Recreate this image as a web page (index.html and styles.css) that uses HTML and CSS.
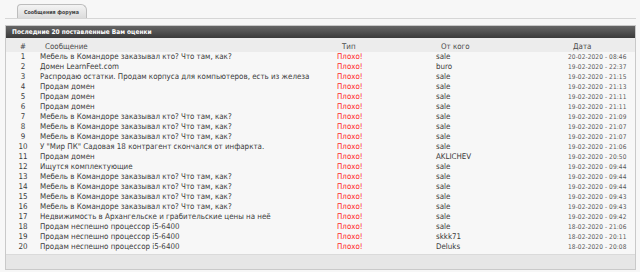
FILE: index.html
```html
<!DOCTYPE html>
<html lang="ru">
<head>
  <meta charset="UTF-8">
  <title>Оценки</title>
  <link rel="stylesheet" href="styles.css">
</head>
<body>

<div class="tabs">
  <span class="tab">Сообщения форума</span>
</div>

<div class="panel">
  <div class="panelTitle">Последние 20 поставленные Вам оценки</div>
  <table class="ratings">
    <thead>
      <tr>
        <th class="num">#</th>
        <th class="msg">Сообщение</th>
        <th class="type">Тип</th>
        <th class="who">От кого</th>
        <th class="date">Дата</th>
      </tr>
    </thead>
    <tbody>
      <tr><td class="num">1</td><td class="msg">Мебель в Командоре заказывал кто? Что там, как?</td><td class="type">Плохо!</td><td class="who">sale</td><td class="date">20-02-2020 - 08:46</td></tr>
      <tr><td class="num">2</td><td class="msg">Домен LearnFeet.com</td><td class="type">Плохо!</td><td class="who">buro</td><td class="date">19-02-2020 - 22:37</td></tr>
      <tr><td class="num">3</td><td class="msg">Распродаю остатки. Продам корпуса для компьютеров, есть из железа</td><td class="type">Плохо!</td><td class="who">sale</td><td class="date">19-02-2020 - 21:15</td></tr>
      <tr><td class="num">4</td><td class="msg">Продам домен</td><td class="type">Плохо!</td><td class="who">sale</td><td class="date">19-02-2020 - 21:13</td></tr>
      <tr><td class="num">5</td><td class="msg">Продам домен</td><td class="type">Плохо!</td><td class="who">sale</td><td class="date">19-02-2020 - 21:11</td></tr>
      <tr><td class="num">6</td><td class="msg">Продам домен</td><td class="type">Плохо!</td><td class="who">sale</td><td class="date">19-02-2020 - 21:11</td></tr>
      <tr><td class="num">7</td><td class="msg">Мебель в Командоре заказывал кто? Что там, как?</td><td class="type">Плохо!</td><td class="who">sale</td><td class="date">19-02-2020 - 21:09</td></tr>
      <tr><td class="num">8</td><td class="msg">Мебель в Командоре заказывал кто? Что там, как?</td><td class="type">Плохо!</td><td class="who">sale</td><td class="date">19-02-2020 - 21:07</td></tr>
      <tr><td class="num">9</td><td class="msg">Мебель в Командоре заказывал кто? Что там, как?</td><td class="type">Плохо!</td><td class="who">sale</td><td class="date">19-02-2020 - 21:07</td></tr>
      <tr><td class="num">10</td><td class="msg">У "Мир ПК" Садовая 18 контрагент скончался от инфаркта.</td><td class="type">Плохо!</td><td class="who">sale</td><td class="date">19-02-2020 - 21:06</td></tr>
      <tr><td class="num">11</td><td class="msg">Продам домен</td><td class="type">Плохо!</td><td class="who">AKLICHEV</td><td class="date">19-02-2020 - 20:50</td></tr>
      <tr><td class="num">12</td><td class="msg">Ищутся комплектующие</td><td class="type">Плохо!</td><td class="who">sale</td><td class="date">19-02-2020 - 09:44</td></tr>
      <tr><td class="num">13</td><td class="msg">Мебель в Командоре заказывал кто? Что там, как?</td><td class="type">Плохо!</td><td class="who">sale</td><td class="date">19-02-2020 - 09:44</td></tr>
      <tr><td class="num">14</td><td class="msg">Мебель в Командоре заказывал кто? Что там, как?</td><td class="type">Плохо!</td><td class="who">sale</td><td class="date">19-02-2020 - 09:44</td></tr>
      <tr><td class="num">15</td><td class="msg">Мебель в Командоре заказывал кто? Что там, как?</td><td class="type">Плохо!</td><td class="who">sale</td><td class="date">19-02-2020 - 09:43</td></tr>
      <tr><td class="num">16</td><td class="msg">Мебель в Командоре заказывал кто? Что там, как?</td><td class="type">Плохо!</td><td class="who">sale</td><td class="date">19-02-2020 - 09:43</td></tr>
      <tr><td class="num">17</td><td class="msg">Недвижимость в Архангельске и грабительские цены на неё</td><td class="type">Плохо!</td><td class="who">sale</td><td class="date">19-02-2020 - 09:42</td></tr>
      <tr><td class="num">18</td><td class="msg">Продам неспешно процессор i5-6400</td><td class="type">Плохо!</td><td class="who">sale</td><td class="date">18-02-2020 - 21:06</td></tr>
      <tr><td class="num">19</td><td class="msg">Продам неспешно процессор i5-6400</td><td class="type">Плохо!</td><td class="who">skkk71</td><td class="date">18-02-2020 - 20:11</td></tr>
      <tr><td class="num">20</td><td class="msg">Продам неспешно процессор i5-6400</td><td class="type">Плохо!</td><td class="who">Deluks</td><td class="date">18-02-2020 - 20:08</td></tr>
    </tbody>
  </table>
  <div class="panelFoot"></div>
</div>

</body>
</html>
```

FILE: styles.css
```css
body {
  margin: 0;
  padding: 4px 4px 0 5px;
  background: #f7f7f7;
  font-family: "DejaVu Sans Condensed", "DejaVu Sans", sans-serif;
  color: #3a3a3a;
}

/* tab strip */
.tabs {
  display: flex;
  padding-left: 12px;
  border-bottom: 1px solid #d6d6d6;
  height: 14px;
}

.tab {
  display: flex;
  align-items: center;
  width: 70px;
  padding-left: 6px;
  height: 14px;
  font-size: 5.3px;
  font-weight: bold;
  color: #444;
  background: linear-gradient(#f4f4f4, #dcdcdc);
  border: 1px solid #bdbdbd;
  border-bottom: none;
  border-radius: 4px 6px 0 0;
  box-sizing: border-box;
}

/* main box */
.panel {
  margin-top: 6px;
  border: 1px solid #c9c9c9;
  background: #f7f7f7;
}

.panelTitle {
  height: 12px;
  line-height: 12px;
  padding-left: 6px;
  font-size: 6.5px;
  font-weight: bold;
  color: #fff;
  background: linear-gradient(#666, #3a3a3a);
}

.ratings {
  width: 100%;
  border-collapse: collapse;
  table-layout: fixed;
  font-size: 7.9px;
}

.ratings th,
.ratings td {
  box-sizing: border-box;
  padding: 0;
}

.ratings th {
  font-weight: normal;
  text-align: left;
  height: 14px;
  padding-top: 2px;
  background: #ececec;
  color: #4a4a4a;
}

.ratings td {
  height: 10px;
  line-height: 10px;
  white-space: nowrap;
}

.ratings .num {
  width: 34px;
  text-align: center;
}

.ratings th.msg,
.ratings th.type,
.ratings th.who,
.ratings th.date {
  padding-left: 5px;
}

.ratings .type {
  width: 99px;
}

.ratings td.type {
  color: #ff1c1c;
}

.ratings .who {
  width: 132px;
}

.ratings .date {
  width: 67px;
}

.ratings td.date {
  font-size: 6.5px;
  letter-spacing: 0.1px;
  color: #5a5a5a;
}

.panelFoot {
  height: 14px;
  margin-top: 2px;
  background: #e6e6e6;
  border-top: 1px solid #dadada;
}
```
